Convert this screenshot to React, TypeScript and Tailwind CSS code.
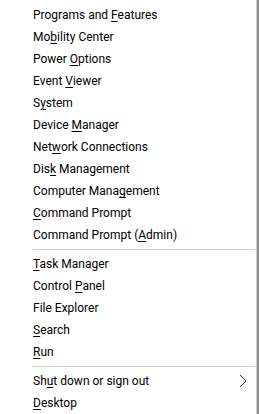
import React from "react";

type Item = { pre: string; key?: string; post?: string };

const group1: Item[] = [
  { pre: "Programs and ", key: "F", post: "eatures" },
  { pre: "Mo", key: "b", post: "ility Center" },
  { pre: "Power ", key: "O", post: "ptions" },
  { pre: "Event ", key: "V", post: "iewer" },
  { pre: "S", key: "y", post: "stem" },
  { pre: "Device ", key: "M", post: "anager" },
  { pre: "Net", key: "w", post: "ork Connections" },
  { pre: "Dis", key: "k", post: " Management" },
  { pre: "Computer Mana", key: "g", post: "ement" },
  { pre: "", key: "C", post: "ommand Prompt" },
  { pre: "Command Prompt (", key: "A", post: "dmin)" },
];

const group2: Item[] = [
  { pre: "", key: "T", post: "ask Manager" },
  { pre: "Control ", key: "P", post: "anel" },
  { pre: "File Explorer" },
  { pre: "", key: "S", post: "earch" },
  { pre: "", key: "R", post: "un" },
];

function Row({ item, chevron }: { item: Item; chevron?: boolean }) {
  return (
    <div className="h-[22px] flex items-center pl-[33px] pr-[8px] leading-[22px]">
      <span className="flex-1 whitespace-pre">
        {item.pre}
        {item.key && (
          <span className="underline decoration-1 underline-offset-[2px]">{item.key}</span>
        )}
        {item.post}
      </span>
      {chevron && (
        <svg width="8" height="14" viewBox="0 0 8 14" className="mr-[1px]">
          <path d="M1 1 L7 7 L1 13" fill="none" stroke="#333344" strokeWidth="1" />
        </svg>
      )}
    </div>
  );
}

function Sep() {
  return (
    <div className="pl-[33px] pr-[1px] py-[3px]">
      <div className="h-px bg-[#cccccc]" />
    </div>
  );
}

export default function App() {
  return (
    <div
      className="w-[259px] h-[414px] bg-white flex text-[12px] text-black overflow-hidden"
      style={{ fontFamily: 'Roboto, "Noto Sans", sans-serif' }}
    >
      <div className="flex-1 flex flex-col pt-[4px]">
        {group1.map((it, i) => (
          <Row key={i} item={it} />
        ))}
        <Sep />
        {group2.map((it, i) => (
          <Row key={i} item={it} />
        ))}
        <Sep />
        <Row item={{ pre: "Sh", key: "u", post: "t down or sign out" }} chevron />
        <Row item={{ pre: "", key: "D", post: "esktop" }} />
      </div>
      <div className="w-px bg-[#d0d0d0]" />
      <div className="w-[2px] bg-[#8c8c8c]" />
    </div>
  );
}
